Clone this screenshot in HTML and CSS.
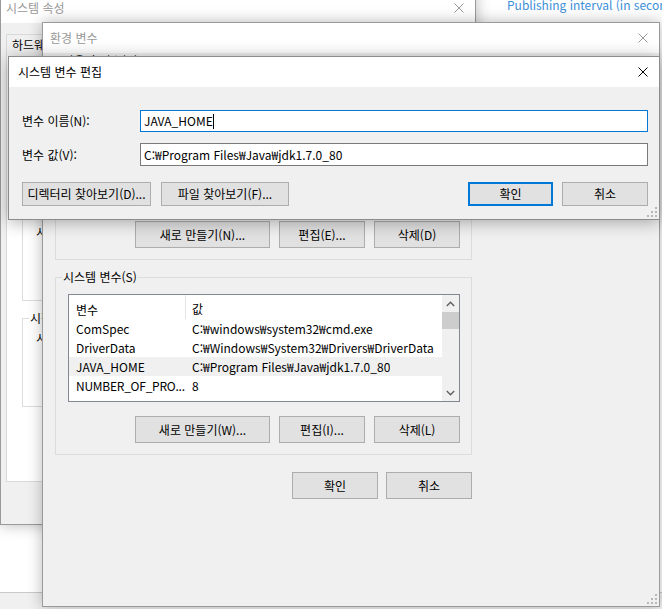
FILE: index.html
```html
<!DOCTYPE html>
<html lang="ko">
<head>
    <meta charset="UTF-8">
    <title>시스템 변수 편집</title>
    <link rel="stylesheet" href="styles.css">
</head>
<body>
<div class="desktop">

    <div class="back-app">
        <div class="back-link">Publishing interval (in seconds)</div>
        <div class="back-text">Select world that publishes</div>
    </div>
    <div class="taskbar"></div>

    <!-- 시스템 속성 -->
    <div class="window sysprops">
        <div class="titlebar inactive">
            <span class="title">시스템 속성</span>
            <span class="close"><svg width="10" height="10" viewBox="0 0 10 10"><path d="M0.5 0.5L9.5 9.5M9.5 0.5L0.5 9.5" stroke="#9a9a9a" stroke-width="1"/></svg></span>
        </div>
        <div class="sp-body">
            <div class="tabs">
                <span class="tab">하드웨어</span>
                <span class="tab">고급</span>
                <span class="tab">시스템 보호</span>
            </div>
            <div class="tab-panel">
                <fieldset class="group sp-perf">
                    <legend>성능</legend>
                    <p>시각 효과, 프로세서 일정, 메모리 사용 및 가상 메모리</p>
                </fieldset>
                <fieldset class="group sp-boot">
                    <legend>시작 및 복구</legend>
                    <p>시스템 시작, 시스템 오류 및 디버깅 정보</p>
                </fieldset>
            </div>
        </div>
    </div>

    <!-- 환경 변수 -->
    <div class="window envvars">
        <div class="titlebar inactive">
            <span class="title">환경 변수</span>
            <span class="close"><svg width="10" height="10" viewBox="0 0 10 10"><path d="M0.5 0.5L9.5 9.5M9.5 0.5L0.5 9.5" stroke="#9a9a9a" stroke-width="1"/></svg></span>
        </div>
        <div class="ev-body">
            <fieldset class="group ev-group">
                <legend>사용자 변수(U)</legend>
                <div class="listview user-list">
                    <div class="lv-main">
                        <div class="lv-head"><span class="col-name">변수</span><span class="col-value">값</span></div>
                        <div class="lv-row"><span class="col-name">OneDrive</span><span class="col-value">C:₩Users₩user₩OneDrive</span></div>
                        <div class="lv-row"><span class="col-name">Path</span><span class="col-value">C:₩Users₩user₩AppData₩Local₩Microsoft₩WindowsApps;</span></div>
                        <div class="lv-row"><span class="col-name">TEMP</span><span class="col-value">C:₩Users₩user₩AppData₩Local₩Temp</span></div>
                        <div class="lv-row"><span class="col-name">TMP</span><span class="col-value">C:₩Users₩user₩AppData₩Local₩Temp</span></div>
                    </div>
                </div>
                <div class="btn-row">
                    <button class="btn wide">새로 만들기(N)...</button>
                    <button class="btn">편집(E)...</button>
                    <button class="btn">삭제(D)</button>
                </div>
            </fieldset>

            <fieldset class="group ev-group sys-group">
                <legend>시스템 변수(S)</legend>
                <div class="listview">
                    <div class="lv-main">
                        <div class="lv-head"><span class="col-name">변수</span><span class="col-value">값</span></div>
                        <div class="lv-row"><span class="col-name">ComSpec</span><span class="col-value">C:₩windows₩system32₩cmd.exe</span></div>
                        <div class="lv-row"><span class="col-name">DriverData</span><span class="col-value">C:₩Windows₩System32₩Drivers₩DriverData</span></div>
                        <div class="lv-row selected"><span class="col-name">JAVA_HOME</span><span class="col-value">C:₩Program Files₩Java₩jdk1.7.0_80</span></div>
                        <div class="lv-row"><span class="col-name tight">NUMBER_OF_PRO...</span><span class="col-value">8</span></div>
                    </div>
                    <div class="lv-scroll">
                        <span class="sb-arrow"><svg width="9" height="6" viewBox="0 0 9 6"><path d="M0.8 5L4.5 1.3L8.2 5" fill="none" stroke="#606060" stroke-width="1.4"/></svg></span>
                        <span class="sb-thumb"></span>
                        <span class="sb-track"></span>
                        <span class="sb-arrow"><svg width="9" height="6" viewBox="0 0 9 6"><path d="M0.8 1L4.5 4.7L8.2 1" fill="none" stroke="#606060" stroke-width="1.4"/></svg></span>
                    </div>
                </div>
                <div class="btn-row">
                    <button class="btn wide">새로 만들기(W)...</button>
                    <button class="btn">편집(I)...</button>
                    <button class="btn">삭제(L)</button>
                </div>
            </fieldset>

            <div class="ok-row">
                <button class="btn">확인</button>
                <button class="btn">취소</button>
            </div>
        </div>
        <svg class="grip" width="10" height="10" viewBox="0 0 10 10"><g fill="#b8b8b8"><rect x="8" y="0" width="2" height="2"/><rect x="4" y="4" width="2" height="2"/><rect x="8" y="4" width="2" height="2"/><rect x="0" y="8" width="2" height="2"/><rect x="4" y="8" width="2" height="2"/><rect x="8" y="8" width="2" height="2"/></g></svg>
    </div>

    <!-- 시스템 변수 편집 -->
    <div class="window editvar">
        <div class="titlebar">
            <span class="title">시스템 변수 편집</span>
            <span class="close"><svg width="10" height="10" viewBox="0 0 10 10"><path d="M0.5 0.5L9.5 9.5M9.5 0.5L0.5 9.5" stroke="#000" stroke-width="1"/></svg></span>
        </div>
        <div class="ed-body">
            <div class="field-row name-row">
                <label>변수 이름(N):</label>
                <div class="textbox focused">JAVA_HOME<span class="caret"></span></div>
            </div>
            <div class="field-row value-row">
                <label>변수 값(V):</label>
                <div class="textbox">C:₩Program Files₩Java₩jdk1.7.0_80</div>
            </div>
            <div class="ed-buttons">
                <button class="btn small dir">디렉터리 찾아보기(D)...</button>
                <button class="btn small file">파일 찾아보기(F)...</button>
                <button class="btn small default push">확인</button>
                <button class="btn small">취소</button>
            </div>
        </div>
        <svg class="grip" width="10" height="10" viewBox="0 0 10 10"><g fill="#b8b8b8"><rect x="8" y="0" width="2" height="2"/><rect x="4" y="4" width="2" height="2"/><rect x="8" y="4" width="2" height="2"/><rect x="0" y="8" width="2" height="2"/><rect x="4" y="8" width="2" height="2"/><rect x="8" y="8" width="2" height="2"/></g></svg>
    </div>

</div>
</body>
</html>
```

FILE: styles.css
```css
* {
    box-sizing: border-box;
}

body {
    margin: 0;
    font-family: "Noto Sans CJK KR", "Liberation Sans", sans-serif;
    font-size: 12px;
    line-height: 16px;
    color: #000;
    background: #fff;
}

.desktop {
    position: relative;
    width: 662px;
    height: 609px;
    overflow: hidden;
    background: #fff;
}

/* app behind the dialogs */
.back-app {
    position: absolute;
    left: 476px;
    top: 0;
    width: 186px;
    height: 592px;
    background: #fff;
    padding: 0 0 0 14px;
}

.back-link {
    margin: -3px 0 0 17px;
    color: #3c8fd9;
    white-space: nowrap;
}

.back-text {
    margin-top: 8px;
    color: #333;
    white-space: nowrap;
}

.taskbar {
    position: absolute;
    left: 0;
    top: 592px;
    width: 662px;
    height: 17px;
    border-top: 1px solid #c9c9c9;
    background: #f0f0f0;
}

/* windows */
.window {
    position: absolute;
    display: flex;
    flex-direction: column;
    border: 1px solid #9a9a9a;
    background: #f0f0f0;
    box-shadow: 0 0 14px rgba(0, 0, 0, 0.28);
}

.titlebar {
    flex: none;
    display: flex;
    align-items: center;
    justify-content: space-between;
    height: 30px;
    background: #fff;
}

.titlebar.inactive {
    color: #999;
}

.close {
    width: 32px;
    display: flex;
    justify-content: center;
}

.close svg {
    display: block;
}

.grip {
    position: absolute;
    right: 2px;
    bottom: 2px;
}

.btn {
    height: 27px;
    width: 86px;
    padding: 0;
    font: inherit;
    color: #000;
    background: #e1e1e1;
    border: 1px solid #adadad;
}

.btn.wide {
    width: 135px;
}

.btn.small {
    height: 24px;
}

.btn.default {
    border: 2px solid #0078d7;
}

.group {
    margin: 0;
    min-width: 0;
    border: 1px solid #dcdcdc;
    padding: 0 12px;
}

.group legend {
    padding: 0 1px;
    margin-left: -6px;
}

.group p {
    margin: 0;
    white-space: nowrap;
}

/* 시스템 속성 */
.sysprops {
    left: 0;
    top: -8px;
    width: 476px;
    height: 533px;
    z-index: 1;
}

.sysprops .title {
    padding-left: 5px;
}

.sp-body {
    padding: 11px 5px 0;
}

.tabs {
    display: flex;
    height: 22px;
}

.tab {
    padding: 0 5px;
    line-height: 20px;
    border: 1px solid #d9d9d9;
    border-bottom: none;
    margin-right: -1px;
    background: #f0f0f0;
}

.tab-panel {
    height: 427px;
    margin-top: -1px;
    padding: 0 15px;
    background: #fff;
    border: 1px solid #d9d9d9;
}

.sp-perf {
    margin-top: 86px;
    height: 159px;
}

.sp-perf p {
    margin: 66px 0 0 1px;
}

.sp-boot {
    margin-top: 9px;
    height: 97px;
}

.sp-boot p {
    margin: 4px 0 0 1px;
}

/* 환경 변수 */
.envvars {
    left: 42px;
    top: 22px;
    width: 618px;
    height: 585px;
    z-index: 2;
}

.envvars .title {
    padding-left: 7px;
}

.ev-body {
    padding: 0 0 0 12px;
}

.ev-group {
    width: 417px;
    padding: 9px 11px 11px 12px;
}

.sys-group {
    margin-top: 9px;
}

.listview {
    display: flex;
    height: 108px;
    border: 1px solid #828790;
    background: #fff;
    overflow: hidden;
}

.user-list {
    height: 133px;
}

.lv-main {
    flex: 1;
    min-width: 0;
}

.lv-head,
.lv-row {
    display: flex;
    align-items: center;
    white-space: nowrap;
}

.lv-head {
    height: 24px;
}

.lv-row {
    height: 19px;
}

.lv-row.selected {
    background: #f0f0f0;
}

.col-name {
    flex: none;
    width: 117px;
    padding-left: 7px;
    overflow: hidden;
}

.col-name.tight {
    letter-spacing: -0.25px;
}

.lv-head .col-name {
    height: 24px;
    line-height: 24px;
    border-right: 1px solid #e5e5e5;
}

.lv-head span {
    padding-top: 3px;
    line-height: 21px;
}

.col-value {
    padding-left: 6px;
    overflow: hidden;
}

.lv-scroll {
    flex: none;
    width: 17px;
    display: flex;
    flex-direction: column;
    background: #f0f0f0;
}

.sb-arrow {
    height: 17px;
    display: flex;
    align-items: center;
    justify-content: center;
}

.sb-thumb {
    height: 17px;
    background: #cdcdcd;
}

.sb-track {
    flex: 1;
}

.btn-row {
    display: flex;
    justify-content: flex-end;
    gap: 9px;
    margin-top: 10px;
}

.sys-group .btn-row {
    margin-top: 14px;
}

.ok-row {
    display: flex;
    justify-content: flex-end;
    gap: 8px;
    width: 417px;
    margin-top: 17px;
}

/* 시스템 변수 편집 */
.editvar {
    left: 8px;
    top: 56px;
    width: 652px;
    height: 164px;
    z-index: 3;
    border-color: #8c8c8c;
    box-shadow: 0 2px 16px rgba(0, 0, 0, 0.32);
}

.editvar .title {
    padding-left: 9px;
}

.ed-body {
    padding: 23px 11px 0 13px;
}

.field-row {
    display: flex;
    align-items: center;
}

.field-row label {
    width: 118px;
    flex: none;
}

.name-row {
    height: 22px;
}

.value-row {
    height: 23px;
    margin-top: 11px;
}

.textbox {
    flex: 1;
    height: 100%;
    display: flex;
    align-items: center;
    padding: 0 3px;
    background: #fff;
    border: 1px solid #7a7a7a;
    white-space: nowrap;
}

.textbox.focused {
    border-color: #0078d7;
}

.caret {
    width: 1px;
    height: 15px;
    background: #000;
}

.ed-buttons {
    display: flex;
    margin-top: 16px;
}

.btn.dir {
    width: 129px;
}

.btn.file {
    width: 128px;
    margin-left: 10px;
}

.btn.push {
    margin-left: auto;
    margin-right: 9px;
    width: 85px;
}
```
